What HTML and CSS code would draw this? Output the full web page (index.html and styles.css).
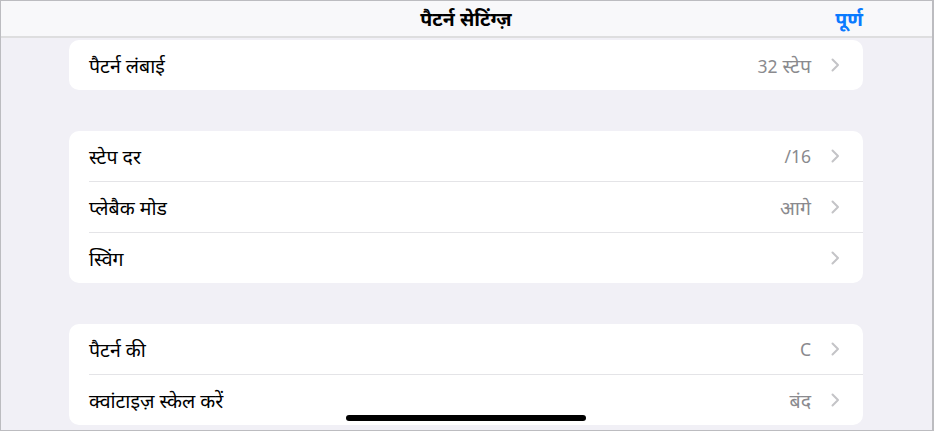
FILE: index.html
```html
<!DOCTYPE html>
<html lang="hi">

<head>
  <meta charset="UTF-8">
  <title>पैटर्न सेटिंग्ज़</title>
  <link rel="stylesheet" href="styles.css">
</head>

<body>
  <div class="screen">

    <div class="navbar">
      <span></span>
      <span class="nav-title">पैटर्न सेटिंग्ज़</span>
      <span class="nav-done">पूर्ण</span>
    </div>

    <div class="content">

      <div class="group first">
        <div class="cell">
          <span class="label">पैटर्न लंबाई</span>
          <span class="value"><span class="latin">32</span> स्टेप</span>
          <svg class="chevron" viewBox="0 0 9 14"><path d="M1.5 1.5 L7 7 L1.5 12.5" /></svg>
        </div>
      </div>

      <div class="group">
        <div class="cell">
          <span class="label">स्टेप दर</span>
          <span class="value latin">/16</span>
          <svg class="chevron" viewBox="0 0 9 14"><path d="M1.5 1.5 L7 7 L1.5 12.5" /></svg>
        </div>
        <div class="cell">
          <span class="label">प्लेबैक मोड</span>
          <span class="value">आगे</span>
          <svg class="chevron" viewBox="0 0 9 14"><path d="M1.5 1.5 L7 7 L1.5 12.5" /></svg>
        </div>
        <div class="cell">
          <span class="label">स्विंग</span>
          <span class="value"></span>
          <svg class="chevron" viewBox="0 0 9 14"><path d="M1.5 1.5 L7 7 L1.5 12.5" /></svg>
        </div>
      </div>

      <div class="group">
        <div class="cell">
          <span class="label">पैटर्न की</span>
          <span class="value latin">C</span>
          <svg class="chevron" viewBox="0 0 9 14"><path d="M1.5 1.5 L7 7 L1.5 12.5" /></svg>
        </div>
        <div class="cell">
          <span class="label">क्वांटाइज़ स्केल करें</span>
          <span class="value">बंद</span>
          <svg class="chevron" viewBox="0 0 9 14"><path d="M1.5 1.5 L7 7 L1.5 12.5" /></svg>
        </div>
      </div>

    </div>

    <div class="home-indicator"></div>
  </div>
</body>

</html>
```

FILE: styles.css
```css
body,
html {
  padding: 0;
  margin: 0;
}

body {
  font-family: "Noto Sans", "Noto Sans Devanagari", sans-serif;
}

.screen {
  position: relative;
  width: 934px;
  height: 431px;
  box-sizing: border-box;
  border: 1px solid #bcbcc0;
  border-right-width: 2px;
  background: #f1f0f6;
  overflow: hidden;
}

.navbar {
  height: 35px;
  display: grid;
  grid-template-columns: 1fr auto 1fr;
  align-items: center;
  padding: 0 69px 0 68px;
  background: #f8f8fa;
  border-bottom: 2px solid #dededf;
}

.nav-title {
  font-size: 19.5px;
  font-weight: 700;
  color: #000;
}

.nav-done {
  justify-self: end;
  font-size: 19.5px;
  font-weight: 700;
  color: #0a7aff;
}

.content {
  padding: 2px 69px 0 68px;
}

.group {
  background: #fff;
  border-radius: 10px;
  margin-top: 41px;
  overflow: hidden;
}

.group.first {
  margin-top: 0;
}

.cell {
  height: 50px;
  display: flex;
  align-items: center;
  padding: 0 23px 0 20px;
}

.cell + .cell {
  border-top: 1px solid #e4e4e7;
  margin-left: 20px;
  padding-left: 0;
}

.label {
  flex: 1;
  font-size: 19.5px;
  color: #000;
}

.value {
  font-size: 19.5px;
  color: #8a8a8e;
  margin-right: 20px;
}

.latin {
  font-size: 17.5px;
}

.chevron {
  width: 9px;
  height: 14px;
  fill: none;
  stroke: #c4c4c7;
  stroke-width: 2;
  stroke-linecap: round;
  stroke-linejoin: round;
}

.home-indicator {
  position: absolute;
  left: 345px;
  bottom: 9px;
  width: 240px;
  height: 6px;
  border-radius: 3px;
  background: #000;
}
```
